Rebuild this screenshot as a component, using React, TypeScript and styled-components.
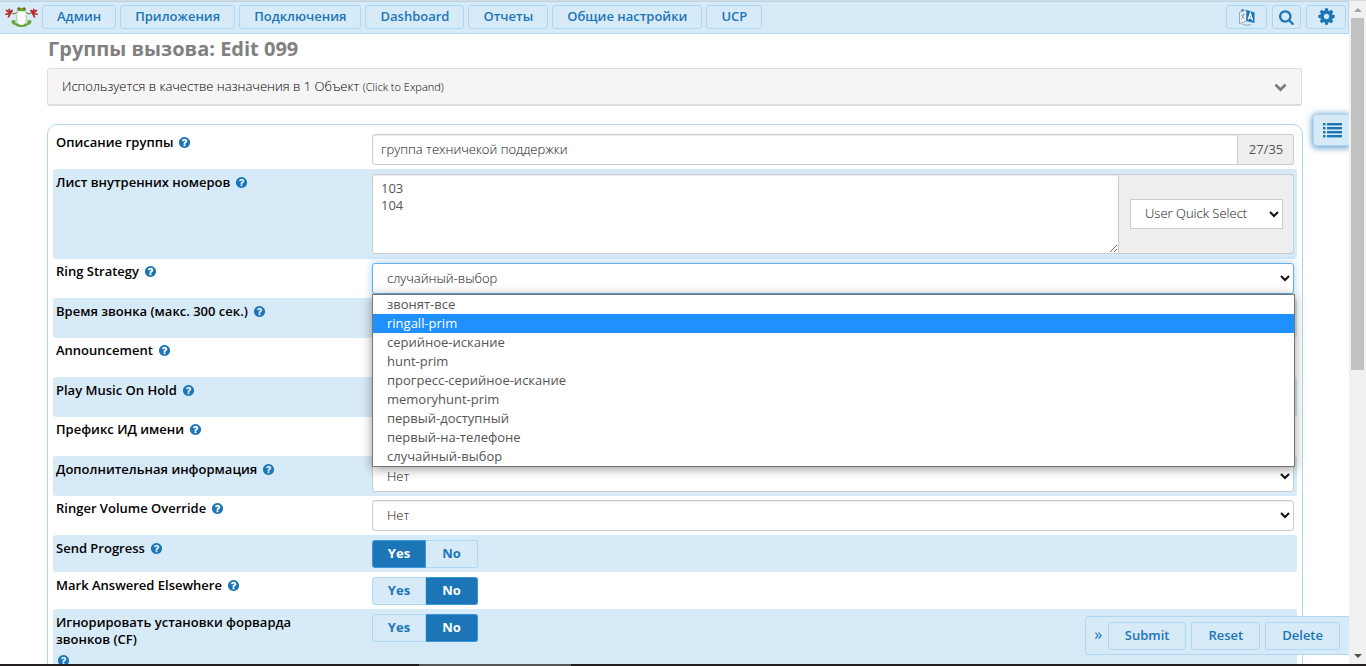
import React from "react";
import styled, { createGlobalStyle, css } from "styled-components";

const c = {
  pale: "#d7eaf8",
  line: "#b0d7f2",
  blue: "#1b75b6",
  field: "#555",
  border: "#ccc",
};

const GlobalStyle = createGlobalStyle`
  *, *::before, *::after { box-sizing: border-box; }
  html, body { margin: 0; height: 100%; overflow: hidden; background: #fff; }
  body, button, input, select, textarea {
    font-family: "Open Sans", "Noto Sans", sans-serif;
    font-size: 13px;
    line-height: 17px;
  }
`;

const Screen = styled.div`
  display: flex;
  flex-direction: column;
  height: 100vh;
  border-top: 1px solid #d8d8d8;
`;

const Browser = styled.div`
  display: flex;
  flex: 1;
  min-height: 0;
`;

const Page = styled.div`
  position: relative;
  flex: 1;
  min-width: 0;
  overflow: hidden;
`;

const buttonLook = css`
  display: flex;
  align-items: center;
  justify-content: center;
  margin: 0;
  border: 1px solid ${c.line};
  border-radius: 3px;
  background: ${c.pale};
  color: ${c.blue};
  font-weight: 600;
  white-space: nowrap;
`;

const NavBar = styled.header`
  display: flex;
  align-items: center;
  height: 33px;
  padding: 0 2px 2px 5px;
  border: 1px solid ${c.line};
  border-left-width: 0;
  background: ${c.pale};
`;

const Logo = styled.a`
  display: flex;
  width: 33px;
  margin-right: 4px;
`;

const Menu = styled.nav`
  display: flex;
  flex: 1;
  gap: 4px;
`;

const NavButton = styled.button`
  ${buttonLook}
  height: 24px;
  padding: 0 14px;
`;

const Tools = styled.div`
  display: flex;
  gap: 5px;
`;

const ToolButton = styled.button<{ $width: number }>`
  ${buttonLook}
  width: ${(p) => p.$width}px;
  height: 24px;
  padding: 0;
`;

const Content = styled.main`
  padding: 0 46px 0 47px;
`;

const Title = styled.h1`
  margin: 0;
  padding: 2px 0 6px 1px;
  color: #808080;
  font-size: 20px;
  font-weight: 700;
  line-height: 26px;
`;

const UsageBox = styled.button`
  display: flex;
  align-items: center;
  justify-content: space-between;
  width: calc(100% - 1px);
  height: 38px;
  margin: 0 0 18px;
  padding: 0 14px;
  border: 1px solid #ddd;
  border-bottom-width: 2px;
  border-radius: 3px;
  background: #f5f5f5;
  color: #000;
  font-weight: 300;
  text-align: left;
`;

const Small = styled.small`
  font-size: 11px;
`;

const Panel = styled.form`
  margin: 0;
  padding: 5px;
  border: 1px solid ${c.line};
  border-radius: 10px;
`;

const Row = styled.div<{ $band?: boolean; $pad?: string; $min?: number }>`
  display: grid;
  grid-template-columns: 319px minmax(0, 1fr);
  align-items: start;
  min-height: ${(p) => p.$min || 0}px;
  padding: ${(p) => p.$pad || (p.$band ? "5px 3px 4px 0" : "4px 3px 4px 0")};
  border-radius: 3px;
  background: ${(p) => (p.$band ? c.pale : "transparent")};
`;

const LabelCell = styled.div`
  display: flex;
  flex-wrap: wrap;
  gap: 4px;
  padding: 0 26px 0 3px;
`;

const labelText = css`
  color: #000;
  font-weight: 600;
`;

const Label = styled.label`
  ${labelText}
`;

const GroupLabel = styled.span`
  ${labelText}
`;

const HelpMark = styled.span`
  display: flex;
  align-items: center;
  height: 17px;
  margin-left: 1px;
  color: ${c.blue};
`;

const FieldCell = styled.div`
  position: relative;
  display: flex;
  min-width: 0;
`;

const fieldLook = css`
  margin: 0;
  border: 1px solid ${c.border};
  border-radius: 3px;
  background: #fff;
  color: ${c.field};
  outline: none;
  box-shadow: inset 0 1px 1px rgba(0, 0, 0, 0.08);
`;

const TextInput = styled.input<{ $joined?: boolean }>`
  ${fieldLook}
  flex: 1;
  min-width: 0;
  height: 31px;
  padding: 5px 8px 6px;
  color: #111;
  font-weight: 300;
  ${(p) => p.$joined && "border-radius: 3px 0 0 3px;"}
`;

const TextBox = styled.textarea`
  ${fieldLook}
  flex: 1;
  min-width: 0;
  height: 80px;
  padding: 5px 8px;
  border-radius: 3px 0 0 3px;
  resize: vertical;
`;

const Select = styled.select<{ $active?: boolean }>`
  ${fieldLook}
  flex: 1;
  min-width: 0;
  height: 31px;
  padding: 0 1px 2px 10px;
  color: #111;
  font-weight: 300;
  ${(p) =>
    p.$active &&
    css`
      border-color: #66afe9;
      box-shadow: 0 0 8px rgba(102, 175, 233, 0.6);
    `}
`;

const QuickSelect = styled(Select)`
  height: 30px;
  border-radius: 0;
  box-shadow: none;
`;

const Addon = styled.div<{ $width: number }>`
  display: flex;
  align-items: center;
  justify-content: center;
  width: ${(p) => p.$width}px;
  padding: 0 10px 0 11px;
  border: 1px solid ${c.border};
  border-left: 0;
  border-radius: 0 3px 3px 0;
  background: #eee;
  color: ${c.field};
`;

const OptionList = styled.ul`
  position: absolute;
  z-index: 2;
  top: 31px;
  left: 0;
  right: -1px;
  margin: 0;
  padding: 0;
  border: 1px solid #767676;
  background: #fff;
  box-shadow: 0 2px 10px rgba(0, 0, 0, 0.4);
  list-style: none;
`;

const OptionItem = styled.li<{ $current: boolean }>`
  height: 19px;
  padding: 0 14px;
  background: ${(p) => (p.$current ? "#1e90ff" : "#fff")};
  color: ${(p) => (p.$current ? "#fff" : c.field)};
  line-height: 19px;
`;

const Switch = styled.div`
  display: flex;
`;

const Choice = styled.label`
  display: flex;
  align-items: center;
  justify-content: center;
  width: 54px;
  height: 28px;
  padding-bottom: 1px;
  border: 1px solid ${c.line};
  border-radius: 3px 0 0 3px;
  background: ${c.pale};
  color: ${c.blue};
  font-weight: 700;

  & + & {
    width: 52px;
    border-left: 0;
    border-radius: 0 3px 3px 0;
  }

  &:has(input:checked) {
    border-color: #3a97dd;
    background: ${c.blue};
    color: #fff;
  }
`;

const HiddenRadio = styled.input`
  position: absolute;
  width: 1px;
  height: 1px;
  margin: 0;
  opacity: 0;
`;

const SideTab = styled.button`
  position: absolute;
  z-index: 3;
  top: 113px;
  right: 0;
  display: flex;
  align-items: center;
  justify-content: flex-end;
  width: 36px;
  height: 32px;
  padding: 0 7px 0 0;
  border: 1px solid ${c.line};
  border-right: 0;
  border-radius: 4px 0 0 4px;
  background: ${c.pale};
  color: ${c.blue};
  box-shadow: 0 1px 6px 1px rgba(27, 117, 182, 0.7);
`;

const ActionBar = styled.div`
  position: absolute;
  z-index: 3;
  right: 0;
  bottom: 9px;
  display: flex;
  align-items: center;
  gap: 5px;
  height: 39px;
  padding: 0 9px 0 8px;
  border: 1px solid ${c.line};
  border-right: 0;
  border-radius: 4px 0 0 4px;
  background: ${c.pale};
`;

const ActionButton = styled.button`
  ${buttonLook}
  height: 28px;
  padding: 0 16px;
`;

const Collapse = styled.button`
  width: 9px;
  padding: 0 0 2px;
  border: 0;
  background: none;
  color: ${c.blue};
  font-size: 16px;
  line-height: 17px;
`;

const ScrollTrack = styled.div`
  display: flex;
  flex-direction: column;
  align-items: center;
  width: 17px;
  background: #f1f1f1;
`;

const ScrollArrow = styled.div<{ $down?: boolean }>`
  display: flex;
  align-items: center;
  justify-content: center;
  height: 17px;
  color: ${(p) => (p.$down ? "#505050" : "#a3a3a3")};
`;

const ScrollSpace = styled.div`
  flex: 1;
  width: 13px;
`;

const ScrollThumb = styled.div`
  width: 13px;
  height: 56%;
  background: #c1c1c1;
`;

const BottomEdge = styled.div`
  display: flex;
  height: 2px;
  padding-left: 419px;
  background: #231f20;
`;

const BottomEdgeActive = styled.div`
  width: 152px;
  background: #555;
`;

const FrogLogo = () => (
  <svg width="33" height="20" viewBox="0 0 33 20" fill="none">
    <path d="M9.5 14.5C7.4 13 6.8 15.6 9 16.6c1.8.8 4 .8 4.6 1.7M23.5 14.5c2.100-1.500 2.700 1.100.5 2.100-1.800.8-4 .8-4.600 1.700" stroke="#62a631" strokeWidth="2.200" strokeLinecap="round" />
    <path d="M11.500 17.800q5 2.200 10.200 0" stroke="#62a631" strokeWidth="2" />
    <path d="M12.500 5.500 9 6.800 6.500 6M20.500 5.500 24 6.800 26.500 6" stroke="#7a8a3a" strokeWidth="1.300" />
    <path d="M5.500 6 1.500 3.500M5.500 6 1 7.200M5.500 6 4.200 2.500M5.500 6 3.500 9.800M5.500 6 7 3.500M27.500 6l4-2.500M27.500 6l4.500 1.200M27.500 6l1.300-3.500M27.500 6l2 3.800M27.500 6 26 3.500" stroke="#b6262b" strokeWidth="1.700" strokeLinecap="round" />
    <ellipse cx="16.500" cy="10" rx="4.600" ry="7.700" fill="#fff" />
    <path d="M12.200 8c-.8 2.500-.8 5 .6 7.500M20.800 8c.8 2.500.8 5-.6 7.500" stroke="#a8cf8b" strokeWidth="1" />
    <path d="M12 2.500C12 0 15 0 16.500 1.300 18 0 21 0 21 2.500l-.8 1.700h-7.400z" fill="#62a631" />
    <circle cx="13.800" cy="1.500" r="1" fill="#b6262b" />
    <circle cx="19.200" cy="1.500" r="1" fill="#b6262b" />
  </svg>
);

const LanguageIcon = () => (
  <svg width="18" height="18" viewBox="0 0 18 18" fill="none">
    <path d="M3.500 1 8 2.500 3 4z" fill={c.blue} />
    <path d="M1.500 4.500 8.500 2v11l-7 2.500z" stroke="#8fa9bd" strokeWidth="1" fill="#eef6fc" />
    <path d="M3 7.500 7 6M5.500 5.500c.2 3-1 5-2.500 6M4 8l3 3" stroke="#7f93a3" strokeWidth=".9" />
    <path d="m8.500 2 8 2.500V15l-8-2z" fill={c.blue} />
    <path d="m10.300 11.500 2-6.200 2.300 7.200M11 9.700l3 .7" stroke="#fff" strokeWidth="1.300" />
    <path d="M4.500 16c2.500 1.600 6 1.600 8.500.3" stroke="#8fa9bd" strokeWidth="1" />
  </svg>
);

const SearchIcon = () => (
  <svg width="16" height="16" viewBox="0 0 1792 1792" fill="currentColor">
    <path d="M1152 832q0-185-131.500-316.500t-316.500-131.500-316.500 131.500-131.500 316.500 131.500 316.500 316.500 131.500 316.500-131.500 131.500-316.500zm512 832q0 52-38 90t-90 38q-54 0-90-38l-343-342q-179 124-399 124-143 0-273.500-55.500t-225-150-150-225-55.500-273.500 55.500-273.500 150-225 225-150 273.500-55.500 273.500 55.500 225 150 150 225 55.500 273.500q0 220-124 399l343 343q37 37 37 90z" />
  </svg>
);

const GearIcon = () => (
  <svg width="19" height="19" viewBox="0 0 1792 1792" fill="currentColor">
    <path d="M1152 896q0-106-75-181t-181-75-181 75-75 181 75 181 181 75 181-75 75-181zm512-109v222q0 12-8 23t-20 13l-185 28q-19 54-39 91 35 50 107 138 10 12 10 25t-9 23q-27 37-99 108t-94 71q-12 0-26-9l-138-108q-44 23-91 38-16 136-29 186-7 28-36 28h-222q-14 0-24.500-8.500t-11.500-21.500l-28-184q-49-16-90-37l-141 107q-10 9-25 9-14 0-25-11-126-114-165-168-7-10-7-23 0-12 8-23 15-21 51-66.500t54-70.500q-27-50-41-99l-183-27q-13-2-21-12.500t-8-23.500v-222q0-12 8-23t19-13l186-28q14-46 39-92-40-57-107-138-10-12-10-24 0-10 9-23 26-36 98.500-107.500t94.500-71.500q13 0 26 10l138 107q44-23 91-38 16-136 29-186 7-28 36-28h222q14 0 24.500 8.500t11.500 21.500l28 184q49 16 90 37l142-107q9-9 24-9 13 0 25 10 129 119 165 170 7 8 7 22 0 12-8 23-15 21-51 66.500t-54 70.500q26 50 41 98l183 28q13 2 21 12.500t8 23.500z" />
  </svg>
);

const HelpIcon = () => (
  <svg width="13" height="13" viewBox="0 0 1792 1792" fill="currentColor">
    <path d="M1024 1376v-192q0-14-9-23t-23-9h-192q-14 0-23 9t-9 23v192q0 14 9 23t23 9h192q14 0 23-9t9-23zm256-672q0-88-55.500-163t-138.500-116-170-41q-243 0-371 213-15 24 8 42l132 100q7 6 19 6 16 0 25-12 53-68 86-92 34-24 86-24 48 0 85.500 26t37.500 59q0 38-20 61t-68 45q-63 28-115.500 86.500t-52.500 125.500v36q0 14 9 23t23 9h192q14 0 23-9t9-23q0-19 21.500-49.500t54.500-49.500q32-18 49-28.500t46-35 44.500-48 28-60.500 12.500-81zm384 192q0 209-103 385.500t-279.500 279.500-385.500 103-385.500-103-279.500-279.500-103-385.500 103-385.500 279.500-279.500 385.500-103 385.500 103 279.500 279.500 103 385.500z" />
  </svg>
);

const ChevronIcon = () => (
  <svg width="13" height="13" viewBox="0 0 1792 1792" fill="#777">
    <path d="M1683 808l-742 741q-19 19-45 19t-45-19l-742-741q-19-19-19-45.500t19-45.500l166-165q19-19 45-19t45 19l531 531 531-531q19-19 45-19t45 19l166 165q19 19 19 45.500t-19 45.500z" />
  </svg>
);

const ListIcon = () => (
  <svg width="19" height="15" viewBox="0 0 19 15" fill="currentColor">
    {[0, 4, 8, 12].map((y) => (
      <React.Fragment key={y}>
        <rect x="0" y={y} width="2.5" height="2.4" />
        <rect x="4" y={y} width="15" height="2.4" />
      </React.Fragment>
    ))}
  </svg>
);

const menu = ["Админ", "Приложения", "Подключения", "Dashboard", "Отчеты", "Общие настройки", "UCP"];

const strategies = [
  "звонят-все",
  "ringall-prim",
  "серийное-искание",
  "hunt-prim",
  "прогресс-серийное-искание",
  "memoryhunt-prim",
  "первый-доступный",
  "первый-на-телефоне",
  "случайный-выбор",
];

type FieldRowProps = {
  id: string;
  label: string;
  band?: boolean;
  pad?: string;
  min?: number;
  group?: boolean;
  children: React.ReactNode;
};

const FieldRow = ({ id, label, band, pad, min, group, children }: FieldRowProps) => (
  <Row $band={band} $pad={pad} $min={min}>
    <LabelCell>
      {group ? <GroupLabel id={`${id}-label`}>{label}</GroupLabel> : <Label htmlFor={id}>{label}</Label>}
      <HelpMark>
        <HelpIcon />
      </HelpMark>
    </LabelCell>
    <FieldCell>{children}</FieldCell>
  </Row>
);

type YesNoProps = { id: string; label: string; value: "Yes" | "No"; band?: boolean; min?: number };

const YesNoRow = ({ id, label, value, band, min }: YesNoProps) => (
  <FieldRow id={id} label={label} band={band} min={min} pad="5px 3px 4px 0" group>
    <Switch role="radiogroup" aria-labelledby={`${id}-label`}>
      {["Yes", "No"].map((option) => (
        <Choice key={option}>
          <HiddenRadio type="radio" name={id} value={option} defaultChecked={option === value} />
          {option}
        </Choice>
      ))}
    </Switch>
  </FieldRow>
);

export default function App() {
  return (
    <Screen>
      <GlobalStyle />
      <Browser>
        <Page>
          <NavBar>
            <Logo href="#" aria-label="Home">
              <FrogLogo />
            </Logo>
            <Menu>
              {menu.map((item) => (
                <NavButton key={item}>{item}</NavButton>
              ))}
            </Menu>
            <Tools>
              <ToolButton $width={41} aria-label="Language">
                <LanguageIcon />
              </ToolButton>
              <ToolButton $width={29} aria-label="Search">
                <SearchIcon />
              </ToolButton>
              <ToolButton $width={40} aria-label="Settings">
                <GearIcon />
              </ToolButton>
            </Tools>
          </NavBar>

          <Content>
            <Title>Группы вызова: Edit 099</Title>
            <UsageBox>
              <span>
                Используется в качестве назначения в 1 Объект <Small>(Click to Expand)</Small>
              </span>
              <ChevronIcon />
            </UsageBox>

            <Panel>
              <FieldRow id="description" label="Описание группы">
                <TextInput id="description" $joined defaultValue="группа техничекой поддержки" />
                <Addon $width={56}>27/35</Addon>
              </FieldRow>
              <FieldRow id="extensions" label="Лист внутренних номеров" band pad="5px 3px 5px 0">
                <TextBox id="extensions" defaultValue={"103\n104"} />
                <Addon $width={175}>
                  <QuickSelect aria-label="User Quick Select">
                    <option>User Quick Select</option>
                  </QuickSelect>
                </Addon>
              </FieldRow>
              <FieldRow id="strategy" label="Ring Strategy">
                <Select id="strategy" $active defaultValue="случайный-выбор">
                  {strategies.map((name) => (
                    <option key={name}>{name}</option>
                  ))}
                </Select>
                <OptionList role="listbox" aria-label="Ring Strategy">
                  {strategies.map((name) => (
                    <OptionItem
                      key={name}
                      role="option"
                      aria-selected={name === "ringall-prim"}
                      $current={name === "ringall-prim"}
                    >
                      {name}
                    </OptionItem>
                  ))}
                </OptionList>
              </FieldRow>
              <FieldRow id="ringtime" label="Время звонка (макс. 300 сек.)" band>
                <TextInput id="ringtime" />
              </FieldRow>
              <FieldRow id="announcement" label="Announcement">
                <Select id="announcement" />
              </FieldRow>
              <FieldRow id="music" label="Play Music On Hold" band>
                <Select id="music" />
              </FieldRow>
              <FieldRow id="prefix" label="Префикс ИД имени">
                <TextInput id="prefix" />
              </FieldRow>
              <FieldRow id="alertinfo" label="Дополнительная информация" band>
                <Select id="alertinfo">
                  <option>Нет</option>
                </Select>
              </FieldRow>
              <FieldRow id="volume" label="Ringer Volume Override">
                <Select id="volume">
                  <option>Нет</option>
                </Select>
              </FieldRow>
              <YesNoRow id="progress" label="Send Progress" value="Yes" band />
              <YesNoRow id="elsewhere" label="Mark Answered Elsewhere" value="No" />
              <YesNoRow id="ignorecf" label="Игнорировать установки форварда звонков (CF)" value="No" band min={70} />
            </Panel>
          </Content>

          <SideTab aria-label="List">
            <ListIcon />
          </SideTab>
          <ActionBar>
            <Collapse>»</Collapse>
            <ActionButton>Submit</ActionButton>
            <ActionButton>Reset</ActionButton>
            <ActionButton>Delete</ActionButton>
          </ActionBar>
        </Page>

        <ScrollTrack aria-hidden="true">
          <ScrollArrow>
            <svg width="8" height="4" viewBox="0 0 8 4" fill="currentColor">
              <path d="M0 4 4 0l4 4z" />
            </svg>
          </ScrollArrow>
          <ScrollSpace>
            <ScrollThumb />
          </ScrollSpace>
          <ScrollArrow $down>
            <svg width="8" height="4" viewBox="0 0 8 4" fill="currentColor">
              <path d="M0 0h8L4 4z" />
            </svg>
          </ScrollArrow>
        </ScrollTrack>
      </Browser>
      <BottomEdge>
        <BottomEdgeActive />
      </BottomEdge>
    </Screen>
  );
}
